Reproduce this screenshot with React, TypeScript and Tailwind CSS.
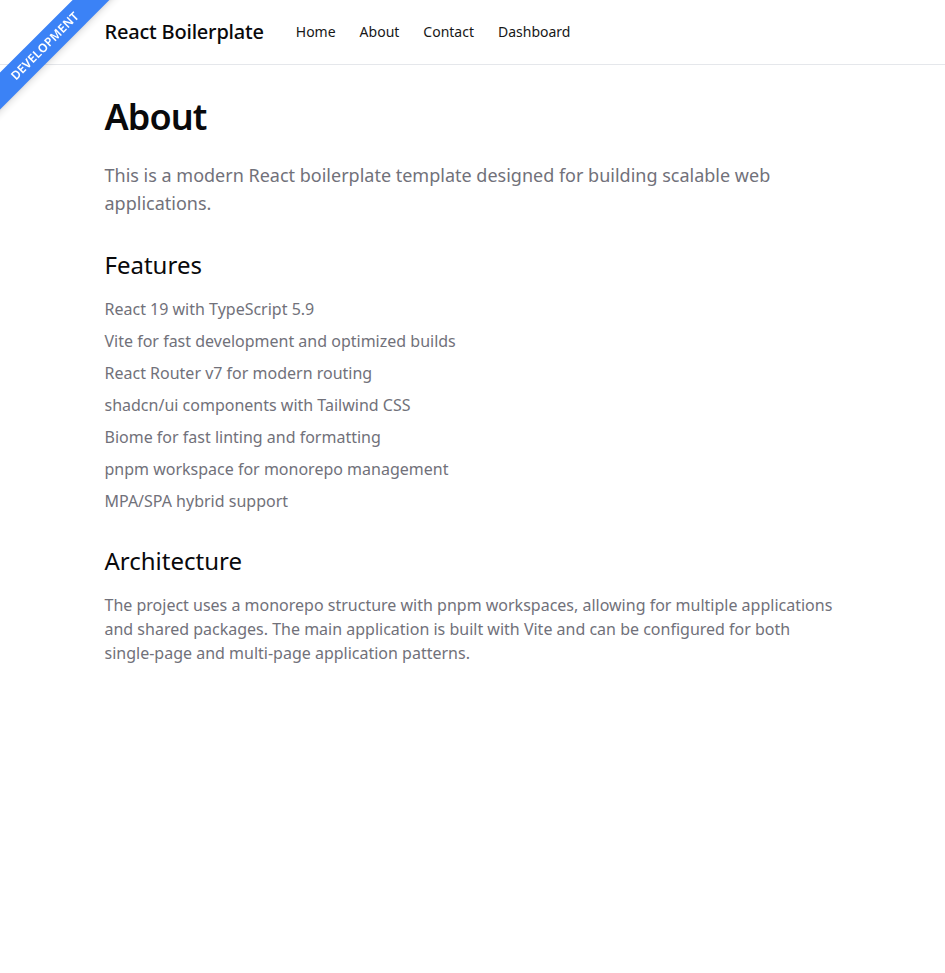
import React from "react";

const features = [
  "React 19 with TypeScript 5.9",
  "Vite for fast development and optimized builds",
  "React Router v7 for modern routing",
  "shadcn/ui components with Tailwind CSS",
  "Biome for fast linting and formatting",
  "pnpm workspace for monorepo management",
  "MPA/SPA hybrid support",
];

const navLinks = ["Home", "About", "Contact", "Dashboard"];

const DevRibbon = () => {
  return (
    <div className="fixed top-0 left-0 z-50 w-[150px] h-[150px] overflow-hidden pointer-events-none">
      <div className="absolute left-[-55px] top-[33px] w-[200px] -rotate-45 bg-[#3b82f6] py-[4px] text-center text-[12px] font-semibold tracking-wide text-white shadow-md">
        DEVELOPMENT
      </div>
    </div>
  );
};

const App = () => {
  return (
    <div className="min-h-screen bg-white text-[#09090b] font-['Noto_Sans',sans-serif]">
      <DevRibbon />
      <header className="border-b border-[#e5e7eb]">
        <div className="container mx-auto px-4 h-16 flex items-center gap-8">
          <span className="text-xl font-medium tracking-[-0.01em]">React Boilerplate</span>
          <nav className="flex gap-6 text-sm text-[#171717]">
            {navLinks.map((link) => (
              <a key={link} href="#" className="hover:text-black">
                {link}
              </a>
            ))}
          </nav>
        </div>
      </header>

      <main className="container mx-auto px-4 py-8">
        <h1 className="text-4xl font-semibold tracking-tight mb-6">About</h1>
        <p className="text-lg text-[#71717a]">
          This is a modern React boilerplate template designed for building
          scalable web applications.
        </p>

        <h2 className="text-2xl mt-8 mb-4">Features</h2>
        <ul className="space-y-2 text-[#71717a]">
          {features.map((item) => (
            <li key={item}>{item}</li>
          ))}
        </ul>

        <h2 className="text-2xl mt-8 mb-4">Architecture</h2>
        <p className="text-[#71717a]">
          The project uses a monorepo structure with pnpm workspaces, allowing
          for multiple applications and shared packages. The main application
          is built with Vite and can be configured for both single-page and
          multi-page application patterns.
        </p>
      </main>
    </div>
  );
};

export default App;
